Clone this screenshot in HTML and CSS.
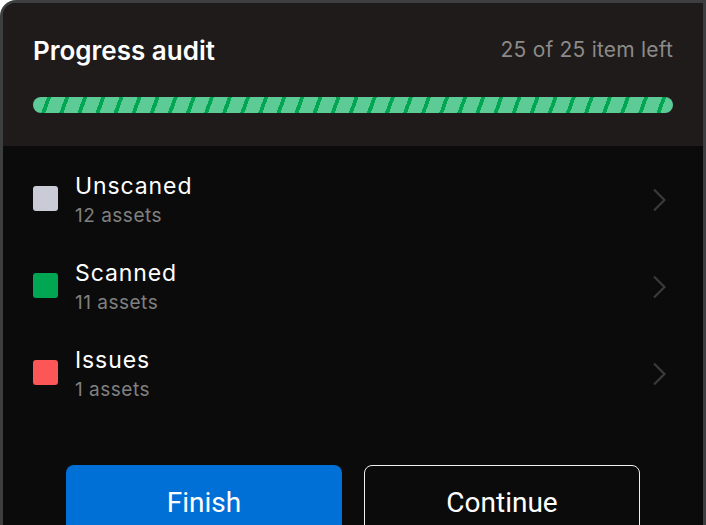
FILE: index.html
```html
<!DOCTYPE html>
<html lang="en">
<head>
<meta charset="utf-8">
<title>Progress audit</title>
<link rel="stylesheet" href="styles.css">
</head>
<body>
<div class="card">
  <header class="card-head">
    <div class="head-row">
      <h1 class="title">Progress audit</h1>
      <span class="count">25 of 25 item left</span>
    </div>
    <div class="bar"></div>
  </header>
  <section class="card-body">
    <ul class="list">
      <li class="row">
        <span class="swatch swatch-gray"></span>
        <div class="row-text">
          <div class="row-title">Unscaned</div>
          <div class="row-sub">12 assets</div>
        </div>
        <svg class="chev" width="14" height="24" viewBox="0 0 14 24"><path d="M2 1.5 L12.5 12 L2 22.5" fill="none" stroke="#3a3a3a" stroke-width="2.2"/></svg>
      </li>
      <li class="row">
        <span class="swatch swatch-green"></span>
        <div class="row-text">
          <div class="row-title">Scanned</div>
          <div class="row-sub">11 assets</div>
        </div>
        <svg class="chev" width="14" height="24" viewBox="0 0 14 24"><path d="M2 1.5 L12.5 12 L2 22.5" fill="none" stroke="#3a3a3a" stroke-width="2.2"/></svg>
      </li>
      <li class="row">
        <span class="swatch swatch-red"></span>
        <div class="row-text">
          <div class="row-title">Issues</div>
          <div class="row-sub">1 assets</div>
        </div>
        <svg class="chev" width="14" height="24" viewBox="0 0 14 24"><path d="M2 1.5 L12.5 12 L2 22.5" fill="none" stroke="#3a3a3a" stroke-width="2.2"/></svg>
      </li>
    </ul>
    <div class="actions">
      <button class="btn btn-primary">Finish</button>
      <button class="btn btn-outline">Continue</button>
    </div>
  </section>
</div>
</body>
</html>
```

FILE: styles.css
```css
html, body {
  margin: 0;
  padding: 0;
  background: #ffffff;
  overflow: hidden;
  height: 525px;
}
* { box-sizing: border-box; }

.card {
  width: 706px;
  height: 600px;
  border: 3px solid #3c3e40;
  border-bottom: none;
  border-radius: 16px 0 0 0;
  background: #0b0b0b;
  overflow: hidden;
  font-family: Inter, "Noto Sans", sans-serif;
}

.card-head {
  background: #1e1b1a;
  padding: 33px 30px 33px 30px;
}

.head-row {
  display: flex;
  justify-content: space-between;
  align-items: center;
  height: 30px;
}

.title {
  margin: 0;
  font-size: 26px;
  line-height: 30px;
  font-weight: 600;
  color: #ffffff;
}

.count {
  font-size: 21px;
  line-height: 26px;
  letter-spacing: 0.2px;
  color: #8c8a89;
  margin-top: -3px;
}

.bar {
  margin-top: 31px;
  height: 16px;
  border-radius: 8px;
  background: repeating-linear-gradient(110deg, #5ccb95 0px, #5ccb95 13.2px, #00a651 13.2px, #00a651 17px);
}

.card-body {
  padding: 26px 30px 0 30px;
}

.list {
  list-style: none;
  margin: 0;
  padding: 0;
  display: flex;
  flex-direction: column;
  gap: 31px;
}

.row {
  display: flex;
  align-items: center;
  gap: 17px;
  padding-right: 7px;
}

.swatch {
  width: 25px;
  height: 25px;
  border-radius: 3px;
  flex: none;
  margin-top: -3px;
}
.swatch-gray { background: #c9ccd6; }
.swatch-green { background: #00a651; }
.swatch-red { background: #fd5656; }

.row-text {
  flex: 1;
}

.row-title {
  font-size: 23px;
  line-height: 28px;
  letter-spacing: 0.9px;
  color: #ffffff;
}

.row-sub {
  margin-top: 4px;
  font-size: 19px;
  line-height: 24px;
  letter-spacing: 0.5px;
  color: #808080;
}

.chev {
  flex: none;
}

.actions {
  margin-top: 63px;
  display: flex;
  justify-content: center;
  gap: 22px;
}

.btn {
  width: 276px;
  height: 74px;
  border-radius: 8px;
  font-family: Roboto, "Liberation Sans", sans-serif;
  font-size: 28px;
  color: #ffffff;
  padding: 0;
}

.btn-primary {
  background: #0070d6;
  border: none;
}

.btn-outline {
  background: #0b0b0b;
  border: 1.5px solid #f0f0f0;
}
```
